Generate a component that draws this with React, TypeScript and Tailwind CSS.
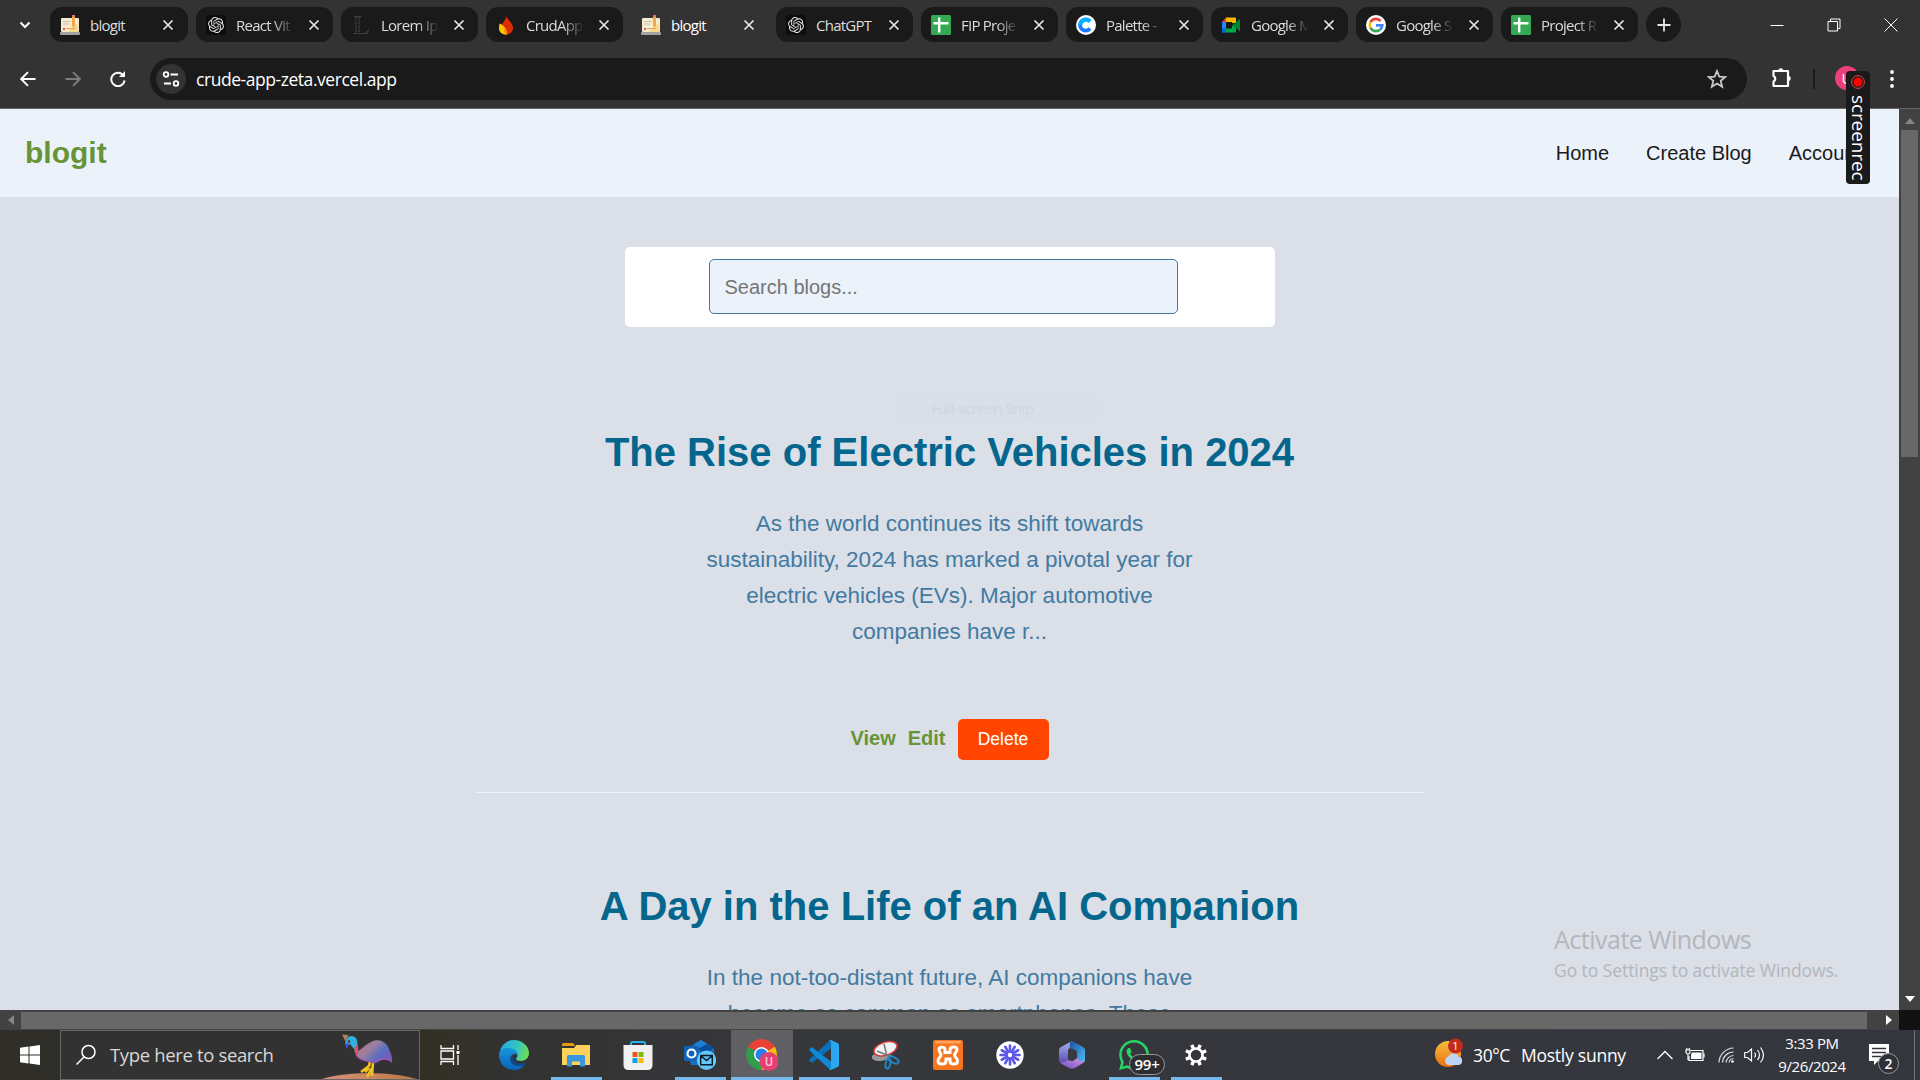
import React from "react";
import { SiOpenai, SiWhatsapp } from "react-icons/si";

const UI = "font-['Open_Sans','Noto_Sans',sans-serif]";

function Notepad() {
  return (
    <svg viewBox="0 0 20 20" className="h-5 w-5 shrink-0">
      <rect x="1" y="3" width="18" height="14" rx="1" fill="#f5ecd2" />
      <path d="M7 17 18 8v9z" fill="#f9d98a" />
      <path d="M3 6.500h8M3 9h6" stroke="#c9c1aa" strokeWidth="1" />
      <path d="M6 13.500h9" stroke="#e8a24e" strokeWidth="1" />
      <rect x="0" y="17" width="20" height="3" rx="1" fill="#a3a3a3" />
      <path d="M12 2h3v8.500l-1.500 2.500-1.500-2.500z" fill="#f5a646" />
      <rect x="12" y="0" width="3" height="2" fill="#e4756b" />
      <circle cx="4" cy="14" r="1.200" fill="#e2584a" />
    </svg>
  );
}
function Gpt() {
  return (
    <span className="flex h-5 w-5 shrink-0 items-center justify-center rounded bg-[#0c0c0c] text-[#e0e0e0]">
      <SiOpenai size={16} />
    </span>
  );
}
function Lorem() {
  return (
    <svg viewBox="0 0 20 20" className="h-5 w-5 shrink-0" fill="none" stroke="#4d4d4d" strokeWidth="1">
      <path d="M3 1.500h7M5 2v16M8 2v15.500M3 18.500h13l1.500-4M15 17.500l2-2" strokeDasharray="2 .6" />
    </svg>
  );
}
function Flame() {
  return (
    <svg viewBox="0 0 20 20" className="h-5 w-5 shrink-0">
      <path d="M10 1c1 3 7 6.500 7 12 0 4-3 6.500-6.500 6.500S5 17 5 13C5 8 10 6 10 1z" fill="#dd2c00" />
      <path d="M3.500 8.500c3 1.500 7.500 4 7.500 11C6 20 3 17 3 13.500c0-2 .2-3.500.5-5z" fill="#ffc400" />
      <path d="M11 19.400c0-3-.8-5-2-6.700C7 15 8 18.500 11 19.400z" fill="#ff9100" />
    </svg>
  );
}
function Sheet() {
  return (
    <svg viewBox="0 0 20 20" className="h-5 w-5 shrink-0">
      <rect width="20" height="20" rx="1.500" fill="#34a853" />
      <path d="M8.200 2.500v15M2.500 8.200h15" stroke="#fff" strokeWidth="2.400" />
    </svg>
  );
}
function Palette() {
  return (
    <svg viewBox="0 0 20 20" className="h-5 w-5 shrink-0">
      <circle cx="10" cy="10" r="10" fill="#fff" />
      <path d="M14 6.500A5.600 5.600 0 1 0 14 13.500" stroke="#1a7bff" strokeWidth="3.800" fill="none" />
      <path d="M4.400 10A5.600 5.600 0 0 1 14 6.500" stroke="#00b4ff" strokeWidth="3.800" fill="none" />
    </svg>
  );
}
function Meet() {
  return (
    <svg viewBox="0 0 20 20" className="h-5 w-5 shrink-0">
      <path d="M1 7v10.500h4V7z" fill="#2684fc" />
      <path d="M1 7h4V2.500z" fill="#ea4335" />
      <path d="M5 2.500h9a1 1 0 0 1 1 1V8h-4V7H5z" fill="#ffba00" />
      <path d="M5 13.500h6V11l4-1v6.500a1 1 0 0 1-1 1H5z" fill="#00ac47" />
      <path d="M11 10l8-6v12.500l-4-3.500z" fill="#00832d" />
      <path d="M1 13.500h4v4H2a1 1 0 0 1-1-1z" fill="#0066da" />
    </svg>
  );
}
function Google() {
  return (
    <svg viewBox="0 0 20 20" className="h-5 w-5 shrink-0">
      <circle cx="10" cy="10" r="10" fill="#fff" />
      <g fill="none" strokeWidth="2.800">
        <path d="M14.600 6A6.200 6.200 0 0 0 4.500 7.200" stroke="#ea4335" />
        <path d="M4.500 7.200a6.200 6.200 0 0 0 0 5.600" stroke="#fbbc05" />
        <path d="M4.500 12.800A6.200 6.200 0 0 0 14 14.700" stroke="#34a853" />
        <path d="M14 14.700A6.200 6.200 0 0 0 16.200 10.300H10" stroke="#4285f4" />
      </g>
    </svg>
  );
}

type TabItem = { icon: React.ReactNode; title: string; active?: boolean; fade?: boolean };
const tabs: TabItem[] = [
  { icon: <Notepad />, title: "blogit" },
  { icon: <Gpt />, title: "React Vit", fade: true },
  { icon: <Lorem />, title: "Lorem Ip", fade: true },
  { icon: <Flame />, title: "CrudApp", fade: true },
  { icon: <Notepad />, title: "blogit", active: true },
  { icon: <Gpt />, title: "ChatGPT" },
  { icon: <Sheet />, title: "FIP Proje", fade: true },
  { icon: <Palette />, title: "Palette -", fade: true },
  { icon: <Meet />, title: "Google M", fade: true },
  { icon: <Google />, title: "Google S", fade: true },
  { icon: <Sheet />, title: "Project R", fade: true },
];

function TabChip({ icon, title, active, fade }: TabItem) {
  return (
    <div className={`flex h-[35px] w-[137px] shrink-0 items-center rounded-xl pl-[10px] first:w-[138px] ${active ? "text-white" : "bg-[#1a1a1a] text-[#dcdcdc]"}`}>
      {icon}
      <span className={`ml-[10px] w-[58px] whitespace-nowrap pt-px text-[15px] leading-[34px] tracking-[-0.75px] ${fade ? "[mask-image:linear-gradient(to_right,black_62%,transparent)]" : ""}`}>
        {title}
      </span>
      <svg viewBox="0 0 12 12" className="ml-[14px] h-3 w-3" stroke="#e6e6e6" strokeWidth="1.700">
        <path d="M1.500 1.500l9 9M10.500 1.500l-9 9" />
      </svg>
    </div>
  );
}

function TabStrip() {
  return (
    <div className="flex h-[49px] items-start pt-[7px]">
      <div className="flex h-[35px] w-[50px] items-center justify-center">
        <svg viewBox="0 0 12 12" className="h-3 w-3" fill="none" stroke="#fff" strokeWidth="2"><path d="M1.500 3.500 6 8l4.500-4.500" /></svg>
      </div>
      <div className="flex gap-2">
        {tabs.map((t, i) => <TabChip key={i} {...t} />)}
        <div className="flex h-[35px] w-[35px] items-center justify-center rounded-full bg-[#1a1a1a]">
          <svg viewBox="0 0 14 14" className="h-[14px] w-[14px]" stroke="#e6e6e6" strokeWidth="1.800"><path d="M7 .5v13M.5 7h13" /></svg>
        </div>
      </div>
      <div className="ml-auto flex h-[35px] items-center gap-[43px] pr-[22px]">
        <svg viewBox="0 0 14 14" className="h-[14px] w-[14px]" stroke="#fff"><path d="M.5 7.500h13" /></svg>
        <svg viewBox="0 0 14 14" className="h-[14px] w-[14px]" stroke="#fff" fill="none"><path d="M1 3.500h9.500V13H1zM3.500 3.500v-2.500h9.500v9.500h-2.500" /></svg>
        <svg viewBox="0 0 14 14" className="h-[14px] w-[14px]" stroke="#fff"><path d="M.5.5l13 13M13.500.5l-13 13" /></svg>
      </div>
    </div>
  );
}

function Toolbar() {
  return (
    <div className="flex h-[60px] items-start border-b border-[#6b6464]">
      <div className="mt-[9px] flex h-[42px] items-center">
        <svg viewBox="0 0 16 16" className="ml-5 h-4 w-4" fill="none" stroke="#fff" strokeWidth="1.900"><path d="M15.500 8H1.500M8 1.200 1.200 8 8 14.800" /></svg>
        <svg viewBox="0 0 16 16" className="ml-[29px] h-4 w-4" fill="none" stroke="#7d7d7d" strokeWidth="1.900"><path d="M.5 8h14M8 1.200 14.800 8 8 14.800" /></svg>
        <svg viewBox="0 0 16 16" className="ml-[29px] h-4 w-4" fill="none" stroke="#fff" strokeWidth="2"><path d="M13.500 4.600A6.700 6.700 0 1 0 14.600 9.500" /><path d="M15 0v6H9z" fill="#fff" stroke="none" /></svg>
      </div>
      <div className="ml-[24px] mt-[9px] flex h-[42px] w-[1597px] items-center rounded-full bg-[#1a1a1a] pl-[6px] pr-[20px]">
        <div className="flex h-[30px] w-[30px] items-center justify-center rounded-full bg-[#333]">
          <svg viewBox="0 0 18 18" className="h-[18px] w-[18px]" fill="none" stroke="#fff" strokeWidth="1.800">
            <circle cx="4" cy="4.500" r="2.300" /><path d="M8.500 4.500h7.500M2 13.500h7" /><circle cx="14" cy="13.500" r="2.300" />
          </svg>
        </div>
        <span className="ml-[10px] whitespace-nowrap pt-px text-[17.500px] tracking-[-0.45px] text-white">crude-app-zeta.vercel.app</span>
        <svg viewBox="0 0 20 20" className="ml-auto h-5 w-5" fill="none" stroke="#c8c8c8" strokeWidth="1.800"><path d="M10 2l2.300 5.600 6 .4-4.600 3.900 1.500 5.900L10 14.600l-5.200 3.200 1.500-5.900L1.700 8l6-.4z" /></svg>
      </div>
      <div className="mt-[9px] flex h-[42px] items-center">
        <svg viewBox="0 0 22 22" className="mb-[2px] ml-[24px] h-[22px] w-[22px]" fill="none" stroke="#fff" strokeWidth="2.200"><path d="M2.500 4H17v15H2.500v-4.500a3 3 0 0 0 0-5.500z" strokeLinejoin="round" /><path d="M7.500 4a2.300 2.300 0 0 1 4.600 0zM17 9.200a2.300 2.300 0 0 1 0 4.600z" fill="#fff" strokeWidth="1" /></svg>
        <div className="ml-[20px] h-5 w-[2px] bg-[#1a1a1a]" />
        <div className="mb-[2px] ml-[20px] flex h-6 w-6 items-center justify-center rounded-full bg-[#ec407a] text-[15px] text-white">U</div>
        <svg viewBox="0 0 4 20" className="ml-[31px] h-5 w-1" fill="#fff"><circle cx="2" cy="3" r="1.900" /><circle cx="2" cy="10" r="1.900" /><circle cx="2" cy="17" r="1.900" /></svg>
      </div>
    </div>
  );
}

function Post({ title, lines }: { title: string; lines: string[] }) {
  return (
    <article className="mx-auto h-[454px] w-[950px] border-b border-[#ebf2fa] text-center">
      <h1 className="pt-[89px] text-[40px] font-bold leading-[48px] text-[#05668d]">{title}</h1>
      <div className="pt-[30px] text-[22.5px] leading-9 text-[#427aa1]">
        {lines.map((l) => <p key={l} className="whitespace-nowrap">{l}</p>)}
      </div>
      <div className="mt-[69px] flex items-center justify-center text-xl font-bold text-[#679436]">
        <a className="mb-[3px] mr-3">View</a>
        <a className="mb-[3px] mr-3">Edit</a>
        <button className="h-[41px] w-[91px] rounded-[5px] bg-[#ff4500] text-[17.5px] font-normal text-white">Delete</button>
      </div>
    </article>
  );
}

function BlogPage() {
  return (
    <div className="h-[901px] w-[1899px] overflow-hidden bg-[#dbdfe7] font-['Liberation_Sans',sans-serif]">
      <nav className="flex h-[88px] items-center bg-[#ebf2fa] pl-[25px] text-xl text-[#1a1a1a]">
        <span className="text-[30px] font-bold text-[#679436]">blogit</span>
        <a className="ml-auto">Home</a>
        <a className="ml-[37px]">Create Blog</a>
        <a className="ml-[37px] mr-[38px]">Account</a>
      </nav>
      <div className="mx-auto mt-[50px] flex h-20 w-[650px] items-start rounded-[5px] bg-white pl-[84px] pt-3">
        <div className="flex h-[55px] w-[469px] items-center rounded-[5px] border border-[#427aa1] bg-[#ebf2fa] pl-[15px] text-xl text-[#757575]">Search blogs...</div>
      </div>
      <div className="mt-[12px]">
        <Post title="The Rise of Electric Vehicles in 2024" lines={["As the world continues its shift towards", "sustainability, 2024 has marked a pivotal year for", "electric vehicles (EVs). Major automotive", "companies have r..."]} />
        <Post title="A Day in the Life of an AI Companion" lines={["In the not-too-distant future, AI companions have", "become as common as smartphones. These"]} />
      </div>
    </div>
  );
}

function Slot({ children, underline, active }: { children: React.ReactNode; underline?: boolean; active?: boolean }) {
  return (
    <div className={`flex h-[50px] w-[62px] shrink-0 flex-col items-center ${active ? "bg-[#606064]" : ""}`}>
      <div className="flex h-[47px] items-center pt-[3px]">{children}</div>
      {underline && <div className={`h-[3px] bg-[#76b9ed] ${active ? "w-full" : "w-[51px]"}`} />}
    </div>
  );
}

function Bird() {
  return (
    <svg viewBox="310 1031 110 48" className="ml-auto h-[48px] w-[110px]">
      <defs>
        <linearGradient id="bd" x1="0" y1=".2" x2="1" y2=".8"><stop offset="0" stopColor="#b8737f" /><stop offset=".4" stopColor="#9a7f9f" /><stop offset=".65" stopColor="#5c6fc0" /><stop offset="1" stopColor="#7b55b8" /></linearGradient>
        <linearGradient id="hl" x1="0" x2="1"><stop offset="0" stopColor="#d98f7e" /><stop offset="1" stopColor="#b97a3e" /></linearGradient>
      </defs>
      <path d="M320 1080c22-9 78-9 100 0z" fill="url(#hl)" />
      <path d="M371 1061l-1 5-8 6M374 1062l-1 14M370 1068l-4 4M373 1068l-5 9" stroke="#f2c11c" strokeWidth="2.600" fill="none" />
      <path d="M355 1046c0 7 3 13 12 15 3 1 6 3 10 2 3-2 7-4 11-4l5 4c1-6-2-12-5-18-4-5-11-6-16-3-5 2-9 7-13 9-2-1-3-4-3-8z" fill="url(#bd)" />
      <path d="M357 1055c4 6 12 7 20 6 5-2 10-3 15 0" stroke="#b04bb8" strokeWidth="1.200" fill="none" />
      <path d="M357 1042c2 6 1 9 1 12" stroke="#e34a6c" strokeWidth="2.200" fill="none" />
      <path d="M343 1034.500l6.500.5-3 6.500z" fill="#b27f5a" />
      <path d="M347 1041c1-6 9-7 11-1 1 4-1 7-3 9l-4-5-4 2c-1-2-1-3 0-5z" fill="#2fb0dd" />
      <path d="M347 1043l0 6 4-5z" fill="#4450c8" />
      <circle cx="350" cy="1041.500" r="1.300" fill="#7a1f14" />
    </svg>
  );
}

function EdgeIcon() {
  return (
    <svg viewBox="0 0 30 30" className="h-[30px] w-[30px]">
      <defs>
        <linearGradient id="eg1" x1="0" x2="1" y1=".2" y2=".4"><stop offset="0" stopColor="#2aa8e8" /><stop offset=".6" stopColor="#31c7c0" /><stop offset="1" stopColor="#6fdc5a" /></linearGradient>
        <linearGradient id="eg2" x1="0" x2="0" y1="0" y2="1"><stop offset="0" stopColor="#1796dd" /><stop offset="1" stopColor="#0c61b8" /></linearGradient>
      </defs>
      <path d="M1 11C3 4 9 0 15 0c8 0 15 6 15 13 0 5-4 8-8 8-3 0-5-1-5-2s1.500-2 1.500-4c0-4-4-6-8-6-4 0-8 1-9.500 2z" fill="url(#eg1)" />
      <path d="M0 15C0 9 5 7.500 10 8c5 .4 8.500 3 8.500 7-2-2-7-1-7 4 0 5 5 9 14 6-2 3-6 5-10.500 5C6 30 0 23 0 15z" fill="url(#eg2)" />
      <path d="M11.500 18c0 6 6 10 14 7l2-2.500c-6 2.500-14 1-14-5.500 0-1 .5-1.500 1-2-2 0-3 1.500-3 3z" fill="#0a4a9c" />
    </svg>
  );
}
function Folder() {
  return (
    <svg viewBox="0 0 28 24" className="h-6 w-7">
      <path d="M0 1.500Q0 0 1.500 0H11l2.500 3H0z" fill="#e29a12" />
      <path d="M0 5h12l2.500-3H28V22H0z" fill="#ffd25c" />
      <path d="M5 23.500V13.500Q5 12 6.500 12h15q1.500 0 1.500 1.500v10h-5v-5h-8v5z" fill="#3a96dd" />
    </svg>
  );
}
function Store() {
  return (
    <svg viewBox="0 0 30 30" className="h-[30px] w-[30px]">
      <path d="M8 6V3.500Q8 2 9.500 2h11Q22 2 22 3.500V6" fill="none" stroke="#28b1ec" strokeWidth="2" />
      <path d="M.5 5h29v20q0 5-5 5h-19q-5 0-5-5z" fill="#f0f0f0" />
      <path fill="#f25022" d="M9.500 12h5v5h-5z" /><path fill="#7fba00" d="M15.500 12h5v5h-5z" /><path fill="#00a4ef" d="M9.500 18h5v5h-5z" /><path fill="#ffb900" d="M15.500 18h5v5h-5z" />
    </svg>
  );
}
function Outlook() {
  return (
    <svg viewBox="0 0 32 30" className="h-[30px] w-8">
      <path d="M4 8 17 0l13 8v17H7z" fill="#1471c9" /><path d="M10 4l7-4 6 4-9 6z" fill="#1b7fd4" /><path d="M14 9l9-5 7 4-8 6z" fill="#0a4c9a" />
      <rect x="0" y="6" width="15" height="15" rx="1.500" fill="#0f64b8" />
      <circle cx="7.500" cy="13.500" r="4" fill="none" stroke="#fff" strokeWidth="2.200" />
      <circle cx="22.500" cy="20.200" r="9.700" fill="#62c6fa" />
      <path d="M16.700 15.500h11.600v9.300H16.700zM16.700 15.500l5.800 5 5.800-5" fill="none" stroke="#0b1b28" strokeWidth="1.400" />
    </svg>
  );
}
function Chrome() {
  return (
    <svg viewBox="0 0 32 32" className="h-8 w-8">
      <path d="M15.500 15.500 2.100 7.800A15.500 15.500 0 0 1 28.900 7.800z" fill="#ea4335" />
      <path d="M15.500 15.500 28.900 7.800A15.500 15.500 0 0 1 15.500 31z" fill="#fbbc05" />
      <path d="M15.500 15.500V31A15.500 15.500 0 0 1 2.100 7.800z" fill="#2f9e4c" />
      <circle cx="15.500" cy="15.500" r="7.500" fill="#fff" /><circle cx="15.500" cy="15.500" r="6" fill="#2b7de9" />
      <circle cx="23" cy="22.500" r="9.500" fill="#e83e76" />
      <text x="23" y="27" textAnchor="middle" fontSize="12" fontWeight="500" fill="#ffc3d5" fontFamily="Roboto">U</text>
    </svg>
  );
}
function Code() {
  return (
    <svg viewBox="0 0 30 30" className="h-[30px] w-[30px]">
      <path d="M22 0v8.500L3.500 22.500q-.7.400-1.300 0L.4 20.800q-.6-.7 0-1.400L20.500.7z" fill="#0a72bb" />
      <path d="M22 30v-8.500L3.500 7.500q-.7-.4-1.300 0L.4 9.200q-.6.700 0 1.400L20.500 29.300z" fill="#1089d4" />
      <path d="M22 0l7 3.300q1 .5 1 1.600v20.200q0 1.100-1 1.600L22 30q-1 .2-2-1 2 .6 2-1.500V2.500Q22 .6 20 1q1-1 2-1z" fill="#2aa7f0" />
    </svg>
  );
}
function Snip() {
  return (
    <svg viewBox="0 0 30 30" className="h-[30px] w-[30px]">
      <path d="M1 16c2-3 8-3 19-3 1 4-5 8-11 8s-9-2-8-5z" fill="#9a9a9a" />
      <ellipse cx="14.500" cy="8.800" rx="12" ry="6.500" transform="rotate(-18 14.500 8.800)" fill="#f3f3f3" stroke="#d43a3a" strokeWidth="1.500" />
      <path d="M13 4l3 12M6 11l12 5" stroke="#777" strokeWidth="1.500" />
      <g fill="none" stroke="#1f86c4" strokeWidth="2"><ellipse cx="17" cy="23.500" rx="2.300" ry="5" transform="rotate(12 17 23.500)" /><ellipse cx="22.500" cy="20" rx="5.500" ry="2.700" transform="rotate(28 22.500 20)" /></g>
    </svg>
  );
}
function Xampp() {
  return (
    <svg viewBox="0 0 30 30" className="h-[30px] w-[30px]">
      <rect width="30" height="30" rx="2" fill="#f5761f" /><rect x="2" y="1" width="26" height="2.500" rx="1.200" fill="#ffa25f" />
      <path d="M6 9.500c0-3 6-3 6 0v3h5V10c0-4 7-4 7-.5 0 2.500-2.500 3.500-2.500 5.500s3 3 3 6c0 4-7.500 4-7.500 0v-2h-4v2c0 4-8 4-8 0 0-3 3-4 3-6s-2-3-2-5.500z" fill="none" stroke="#fff" strokeWidth="3" />
    </svg>
  );
}
function Burst() {
  return (
    <svg viewBox="0 0 28 28" className="h-7 w-7">
      <circle cx="14" cy="14" r="13.700" fill="#fff" />
      {[0, 30, 60, 90, 120, 150, 180, 210, 240, 270, 300, 330].map((a) => (
        <path key={a} d="M14 11V4.500" stroke="#5b57e8" strokeWidth="2.600" strokeLinecap="round" transform={`rotate(${a} 14 14)`} />
      ))}
      <circle cx="14" cy="14" r="2.200" fill="#fff" />
    </svg>
  );
}
function M365() {
  return (
    <svg viewBox="0 0 28 28" className="h-7 w-7">
      <defs>
        <linearGradient id="ma" x1="0" y1="0" x2="0" y2="1"><stop offset="0" stopColor="#a8b5ea" /><stop offset="1" stopColor="#5c48b4" /></linearGradient>
        <linearGradient id="mb" x1="0" y1="0" x2="1" y2="1"><stop offset="0" stopColor="#1c4ca8" /><stop offset="1" stopColor="#4cc3f2" /></linearGradient>
        <linearGradient id="mc" x1="0" x2="1" y1="1" y2="0"><stop offset="0" stopColor="#6f4fb8" /><stop offset="1" stopColor="#d494e6" /></linearGradient>
      </defs>
      <path d="M14 0 3 6Q1 7 1 9v10q0 2 2 3 6 1 7-3V10q0-2 2-3l5-3z" fill="url(#ma)" />
      <path d="M14 0l11 6q2 1 2 3v10q0 2-2 3-6-1-6-4v-6q0-2-2-3l-5-2q-1-7 2-7z" fill="url(#mb)" />
      <path d="M2 21q5 1 8-2l4 1 5-3q4 4 7 3.500-.3 1-1 1.500l-8 5q-3 1.500-6 0l-8-4.500z" fill="url(#mc)" />
      <path d="M10 11l3-3 6 3v6l-4.500 3L10 18z" fill="#3a3b42" />
    </svg>
  );
}
function Gear() {
  return (
    <svg viewBox="0 0 24 24" className="h-6 w-6">
      <circle cx="12" cy="12" r="6.500" fill="none" stroke="#fff" strokeWidth="2.600" />
      {[22.5, 67.5, 112.5, 157.5, 202.5, 247.5, 292.5, 337.5].map((a) => (
        <path key={a} d="M12 5V1" stroke="#fff" strokeWidth="3.400" transform={`rotate(${a} 12 12)`} />
      ))}
    </svg>
  );
}

function Taskbar() {
  return (
    <div className={`flex h-[50px] items-start bg-gradient-to-r from-[#2f2e29] from-15% via-[#36373b] via-40% to-[#34363e] text-white ${UI}`}>
      <div className="flex h-[50px] w-[60px] items-center justify-center">
        <svg viewBox="0 0 20 20" className="h-5 w-5" fill="#fff"><path d="M0 2.700 8.500 1.500V9.500H0zM9.500 1.400 20 0v9.500H9.500zM0 10.500h8.500v8L0 17.300zM9.500 10.500H20V20L9.500 18.600z" /></svg>
      </div>
      <div className="flex h-[50px] w-[360px] items-center overflow-hidden border border-[#666] bg-[#323232] pl-[14px]">
        <svg viewBox="0 0 22 22" className="h-[22px] w-[22px] shrink-0" fill="none" stroke="#fff" strokeWidth="1.500"><circle cx="13.500" cy="8" r="6.500" /><path d="M9 13 1.500 20.500" /></svg>
        <span className="ml-[13px] whitespace-nowrap text-[18.5px] tracking-[-0.350px] text-[#d8d8d8]">Type here to search</span>
        <Bird />
      </div>
      <div className="flex h-[50px] w-[63px] items-center justify-center bg-gradient-to-r from-[#332f23] to-[#33322d] pr-[3px]">
        <svg viewBox="0 0 20 20" className="h-5 w-5" fill="none" stroke="#fff" strokeWidth="1.300"><path d="M1 0v3.500h12.500V0M1 20v-3.500h12.500V20M1 6h12.500v8H1zM18 0v5M18 10v10" /><path d="M16.500 6h3v3h-3z" fill="#fff" stroke="none" /></svg>
      </div>
      <Slot><EdgeIcon /></Slot>
      <Slot underline><Folder /></Slot>
      <Slot><Store /></Slot>
      <Slot underline><Outlook /></Slot>
      <Slot underline active><Chrome /></Slot>
      <Slot underline><Code /></Slot>
      <Slot underline><Snip /></Slot>
      <Slot><Xampp /></Slot>
      <Slot><Burst /></Slot>
      <Slot><M365 /></Slot>
      <Slot underline>
        <div className="relative">
          <SiWhatsapp size={30} color="#25d366" />
          <span className="absolute left-[10px] top-[14px] flex h-[21px] w-9 items-center justify-center rounded-full border border-[#999] bg-[#2d2e32] text-[15px] font-semibold tracking-[-0.3px]">99+</span>
        </div>
      </Slot>
      <Slot underline><Gear /></Slot>
      <div className="ml-auto flex h-[50px] items-center">
        <svg viewBox="0 0 30 30" className="mb-1 h-[30px] w-[30px]">
          <defs><linearGradient id="sn" x1="0" x2="0" y1="0" y2="1"><stop offset="0" stopColor="#f6bf3b" /><stop offset="1" stopColor="#ee6f12" /></linearGradient></defs>
          <circle cx="13" cy="16" r="13" fill="url(#sn)" />
          <path d="M13 27a4.500 4.500 0 0 1 .5-8.500 5.500 5.500 0 0 1 10 0 4.300 4.300 0 0 1 0 8.500z" fill="#bcd4f6" />
          <circle cx="20.500" cy="8" r="7.500" fill="#c42b1c" />
          <text x="20.500" y="12" textAnchor="middle" fontSize="11" fill="#fff">1</text>
        </svg>
        <span className="ml-[8px] whitespace-pre text-[17.5px] tracking-[-0.400px]">30°C</span>
        <span className="ml-[11px] w-[107px] whitespace-nowrap text-[17.5px] tracking-[-0.250px]">Mostly sunny</span>
        <svg viewBox="0 0 16 16" className="ml-[29px] h-4 w-4" fill="none" stroke="#fff" strokeWidth="1.300"><path d="M.5 12 8 4.500l7.500 7.500" /></svg>
        <svg viewBox="0 0 20 16" className="ml-[12px] h-4 w-5" fill="none" stroke="#fff" strokeWidth="1.200"><path d="M6 3.500h12v10H4V9" /><path d="M7 5.500h9.500v6.500H6V7.500z" fill="#fff" stroke="none" /><path d="M19 6.500v4M1 3h4v2a2 2 0 0 1-4 0zM1.800 1v2M4.200 1v2M3 7v6" /></svg>
        <svg viewBox="0 0 16 16" className="ml-[13px] h-4 w-4" fill="none" stroke="#ddd" strokeWidth="1.200"><path d="M1 15.500A15 15 0 0 1 15.500 1M4.500 15.500A11 11 0 0 1 15.500 5M8 15.500A8 8 0 0 1 15.500 8.500M11 15.500a5 5 0 0 1 4.500-4" /><circle cx="14.500" cy="14.500" r="1.300" fill="#fff" stroke="none" /></svg>
        <svg viewBox="0 0 22 18" className="ml-[10px] h-[18px] w-[22px]" fill="none" stroke="#fff" strokeWidth="1.200"><path d="M.7 6.500h2.800L7.500 3v12L3.500 11.500H.7zM10.500 6.500q2 2.500 0 5M13.500 4q4 5 0 10M16.500 1.500q6 7.500 0 15" /></svg>
        <div className="ml-[10px] flex w-[72px] flex-col items-center whitespace-nowrap text-[15px] leading-[23px] tracking-[-0.400px]"><span>3:33 PM</span><span>9/26/2024</span></div>
        <svg viewBox="0 0 32 34" className="ml-[20px] mt-[9px] h-[34px] w-8">
          <path d="M1 1h20v17H10l-4 4v-4H1z" fill="#fff" /><path d="M4 5.500h14M4 9.500h14M4 13.500h9" stroke="#34363e" strokeWidth="1.300" />
          <circle cx="20.500" cy="20.500" r="10" fill="#2f3138" stroke="#999" />
          <text x="20.500" y="25.500" textAnchor="middle" fontSize="14" fontWeight="600" fill="#fff">2</text>
        </svg>
        <div className="ml-[14px] mr-[5px] h-[50px] w-px bg-[#70727a]" />
      </div>
    </div>
  );
}

export default function App() {
  return (
    <div className="relative h-[1080px] w-[1920px] overflow-hidden bg-[#333]">
      <header className={UI}><TabStrip /><Toolbar /></header>
      <div className="flex">
        <BlogPage />
        <div className="flex h-[901px] w-[21px] flex-col items-center bg-[#424242]">
          <svg viewBox="0 0 10 6" className="mt-[9px] h-[6px] w-[10px]" fill="#868686"><path d="M0 6 5 0l5 6z" /></svg>
          <div className="mt-[6px] h-[327px] w-[17px] bg-[#686868]" />
          <svg viewBox="0 0 10 6" className="mb-[8px] mt-auto h-[6px] w-[10px]" fill="#fff"><path d="M0 0 5 6l5-6z" /></svg>
        </div>
      </div>
      <div className="flex h-5 items-center bg-[#424242]">
        <svg viewBox="0 0 6 10" className="ml-2 h-[10px] w-[6px]" fill="#868686"><path d="M6 0 0 5l6 5z" /></svg>
        <div className="ml-[7px] h-[17px] w-[1846px] bg-[#686868]" />
        <svg viewBox="0 0 6 10" className="ml-[19px] h-[10px] w-[6px]" fill="#fff"><path d="M0 0l6 5-6 5z" /></svg>
        <div className="ml-auto h-5 w-[21px] bg-[#111]" />
      </div>
      <Taskbar />

      <div className={`absolute left-[897px] top-[395px] h-[25px] w-[202px] bg-[#d8dfe7] pl-[34px] text-[15px] leading-[27px] tracking-[-0.450px] text-[#cfd6df] ${UI}`}>Full-screen Snip</div>
      <div className={`absolute left-[1554px] top-[920px] whitespace-nowrap text-[#b3b6bc] ${UI}`}>
        <div className="text-[25px] leading-[38px] tracking-[-0.5px]">Activate Windows</div>
        <div className="text-[17.5px] leading-[24px] tracking-[-0.07px]">Go to Settings to activate Windows.</div>
      </div>
      <div className="absolute left-[1846px] top-[71px] flex h-[113px] w-6 flex-col items-center rounded bg-[#1a1a1a] pt-1">
        <svg viewBox="0 0 14 14" className="h-[14px] w-[14px]"><circle cx="7" cy="7" r="6.400" fill="none" stroke="#d94a4a" /><circle cx="7" cy="7" r="4.500" fill="#f00" /></svg>
        <span className="ml-[2px] mt-[6px] whitespace-nowrap font-['Open_Sans',sans-serif] text-[19px] leading-6 tracking-[-0.1px] text-white [writing-mode:vertical-rl]">screenrec</span>
      </div>
    </div>
  );
}
